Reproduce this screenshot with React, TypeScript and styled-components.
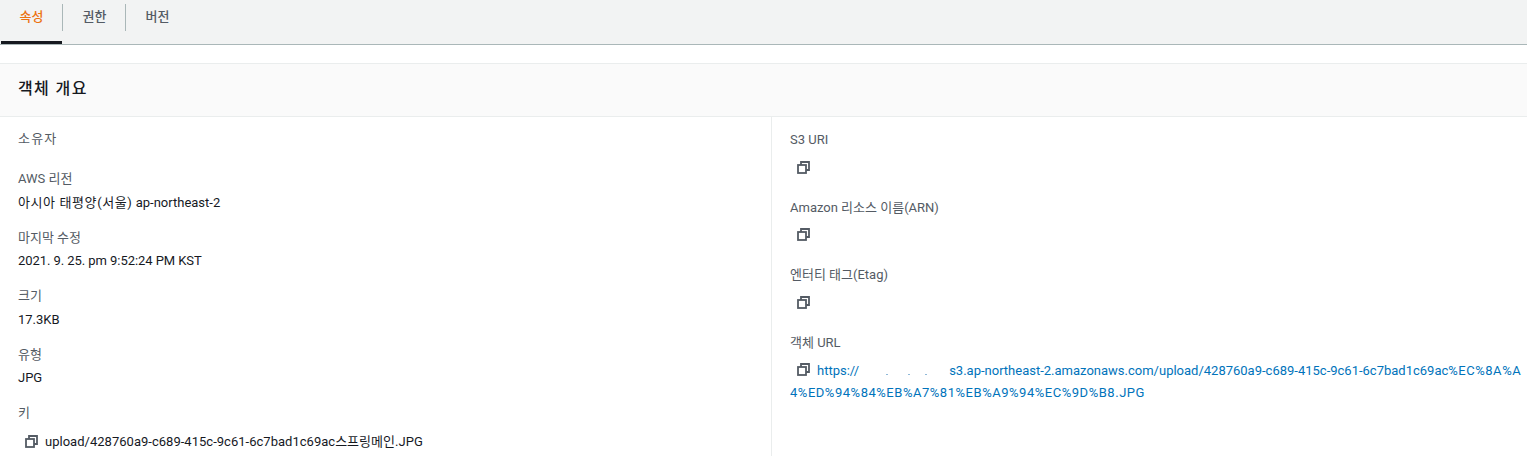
import styled, { createGlobalStyle } from "styled-components";

const GlobalStyle = createGlobalStyle`
  html, body {
    margin: 0;
    padding: 0;
    background: #fff;
    font-family: "Roboto", "Noto Sans CJK KR", sans-serif;
    font-size: 13px;
    line-height: 20px;
    color: #16191f;
  }
`;

const CopyIcon = () => (
  <IconBox viewBox="0 0 13 13" fill="none" stroke="#545b64" strokeWidth="1.8">
    <rect x="1" y="4" width="8" height="8" />
    <path d="M4 4V1h8v8H9" />
  </IconBox>
);

const Field = ({ label, children }: { label: string; children?: React.ReactNode }) => (
  <FieldBox>
    <Label>{label}</Label>
    {children && <Value>{children}</Value>}
  </FieldBox>
);

const CopyField = ({ label }: { label: string }) => (
  <CopyBox>
    <RightLabel>{label}</RightLabel>
    <CopyRow>
      <CopyIcon />
    </CopyRow>
  </CopyBox>
);

export default function App() {
  return (
    <>
      <GlobalStyle />
      <Tabs>
        <Tab $active>속성</Tab>
        <Tab>권한</Tab>
        <Tab $last>버전</Tab>
      </Tabs>
      <Panel>
        <PanelHeader>객체 개요</PanelHeader>
        <Columns>
          <Column>
            <Owner>소유자</Owner>
            <Field label="AWS 리전">
              <Wide>아시아 태평양(서울)</Wide> ap-northeast-2
            </Field>
            <Field label="마지막 수정">
              <Tight>2021. 9. 25. pm 9:52:24 PM KST</Tight>
            </Field>
            <Field label="크기">17.3KB</Field>
            <Field label="유형">JPG</Field>
            <FieldBox>
              <Label>키</Label>
              <KeyRow>
                <CopyIcon />
                <span>upload/428760a9-c689-415c-9c61-6c7bad1c69ac스프링메인.JPG</span>
              </KeyRow>
            </FieldBox>
          </Column>
          <RightColumn>
            <CopyField label="S3 URI" />
            <CopyField label="Amazon 리소스 이름(ARN)" />
            <CopyField label="엔터티 태그(Etag)" />
            <FieldBox>
              <RightLabel>객체 URL</RightLabel>
              <UrlBlock>
                <UrlIcon>
                  <CopyIcon />
                </UrlIcon>
                <Link>
                  https://
                  <Masked>
                    <Speck $gap={27} />
                    <Speck $gap={20} />
                    <Speck $gap={15} />
                  </Masked>
                  s3.ap-northeast-2.amazonaws.com/upload/428760a9-c689-415c-9c61-6c7bad1c69ac
                  <Encoded>%EC%8A%A4%ED%94%84%EB%A7%81%EB%A9%94%EC%9D%B8.JPG</Encoded>
                </Link>
              </UrlBlock>
            </FieldBox>
          </RightColumn>
        </Columns>
      </Panel>
    </>
  );
}

const Tabs = styled.div`
  display: flex;
  height: 44px;
  padding-left: 1px;
  background: #f2f3f3;
  border-bottom: 1px solid #aab7b8;
`;

const Tab = styled.div<{ $active?: boolean; $last?: boolean }>`
  position: relative;
  box-sizing: border-box;
  width: 61px;
  height: 44px;
  margin-right: 2px;
  padding-top: 7px;
  text-align: center;
  font-weight: 500;
  color: ${(p) => (p.$active ? "#ec7211" : "#545b64")};
  border-bottom: ${(p) => (p.$active ? "3px solid #16191f" : "none")};

  &::after {
    content: "";
    display: ${(p) => (p.$last ? "none" : "block")};
    position: absolute;
    top: 4px;
    right: -1px;
    width: 1px;
    height: 27px;
    background: #aab7b8;
  }
`;

const Panel = styled.div`
  margin-top: 18px;
  background: #fff;
`;

const PanelHeader = styled.div`
  box-sizing: border-box;
  height: 54px;
  padding: 15px 18px 0;
  background: #fafafa;
  border-top: 1px solid #eaeded;
  border-bottom: 1px solid #eaeded;
  font-size: 16px;
  font-weight: 500;
  letter-spacing: 1.4px;
  color: #16191f;
`;

const Columns = styled.div`
  display: grid;
  grid-template-columns: 771px 1fr;
  height: 339px;
  overflow: hidden;
`;

const Column = styled.div`
  padding: 12px 18px 0;
`;

const RightColumn = styled.div`
  padding: 13px 0 0 18px;
  border-left: 1px solid #eaeded;
`;

const Owner = styled.div`
  height: 40px;
  letter-spacing: 1.2px;
  color: #545b64;
`;

const FieldBox = styled.div`
  height: 58.5px;
`;

const CopyBox = styled.div`
  height: 67.6px;
`;

const Label = styled.div`
  height: 23.5px;
  color: #545b64;
`;

const RightLabel = styled.div`
  height: 27.4px;
  color: #545b64;
`;

const Value = styled.div`
  color: #16191f;
`;

const Wide = styled.span`
  letter-spacing: 0.6px;
`;

const Tight = styled.span`
  letter-spacing: -0.06px;
`;

const CopyRow = styled.div`
  display: flex;
  align-items: center;
  height: 20px;
  padding-left: 7px;
`;

const KeyRow = styled.div`
  display: flex;
  align-items: center;
  gap: 7px;
  margin-top: 5px;
  padding-left: 7px;
  white-space: nowrap;
  letter-spacing: 0.02px;
`;

const IconBox = styled.svg`
  display: block;
  flex: none;
  width: 13px;
  height: 13px;
`;

const UrlBlock = styled.div`
  line-height: 22px;
`;

const UrlIcon = styled.span`
  display: inline-block;
  vertical-align: -1px;
  margin: 0 7px 0 7px;
`;

const Link = styled.span`
  color: #0073bb;
  word-break: break-all;
`;

const Encoded = styled.span`
  letter-spacing: 0.53px;
`;

const Masked = styled.span`
  display: inline-flex;
  align-items: flex-end;
  width: 90px;
  height: 11px;
`;

const Speck = styled.i<{ $gap: number }>`
  display: block;
  width: 2px;
  height: 1px;
  margin-left: ${(p) => p.$gap}px;
  background: #8fb8d8;
`;
